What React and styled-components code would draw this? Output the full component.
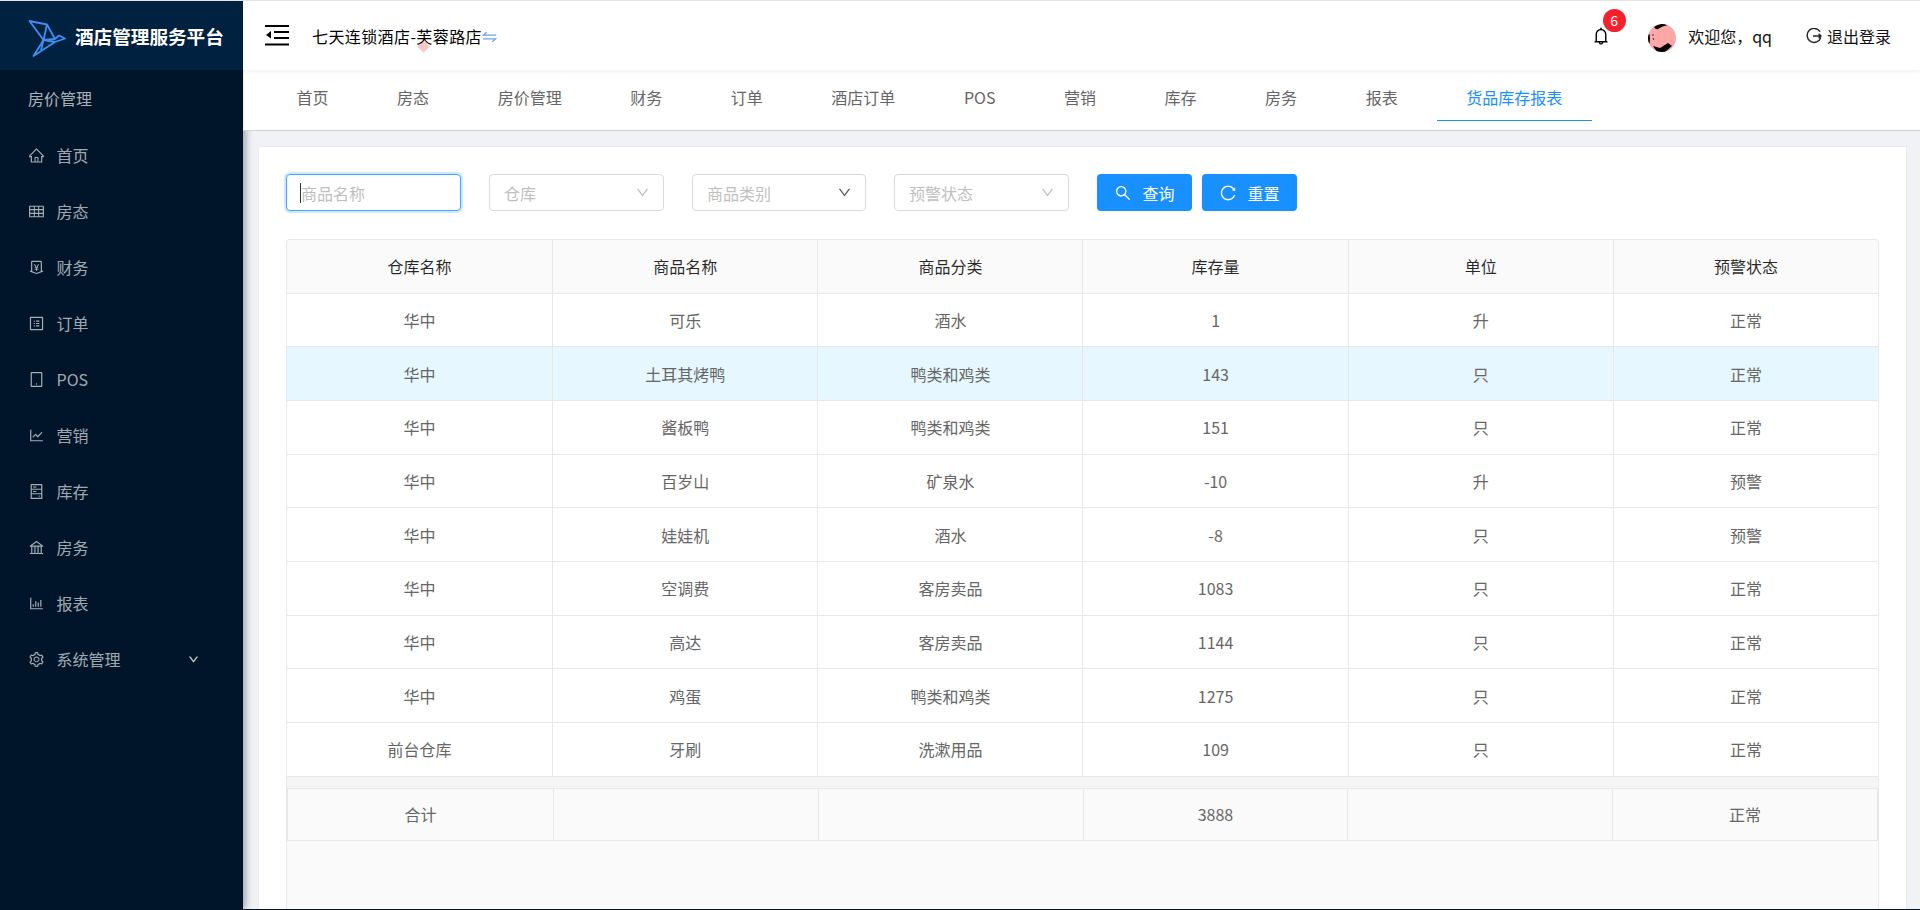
import React from 'react';
import styled, { createGlobalStyle } from 'styled-components';
import {
  AiOutlineHome,
  AiOutlineTable,
  AiOutlineMoneyCollect,
  AiOutlineProfile,
  AiOutlineTablet,
  AiOutlineLineChart,
  AiOutlineHdd,
  AiOutlineBank,
  AiOutlineBarChart,
  AiOutlineSetting,
  AiOutlineBell,
  AiOutlineSearch,
  AiOutlineReload,
  AiOutlineDown,
} from 'react-icons/ai';

const FONT = '"Noto Sans CJK SC", "Noto Sans", sans-serif';

const GlobalStyle = createGlobalStyle`
  html, body {
    margin: 0;
    padding: 0;
    height: 100%;
    overflow: hidden;
    font-family: ${FONT};
    font-size: 16px;
  }
  #root {
    height: 100%;
  }
  * {
    box-sizing: border-box;
  }
`;

const Page = styled.div`
  width: 1920px;
  height: 910px;
  display: flex;
  flex-direction: column;
  border-top: 1px solid #e4e4e4;
  border-bottom: 1px solid #001529;
  overflow: hidden;
`;

const Shell = styled.div`
  flex: 1;
  min-height: 0;
  display: flex;
`;

const Sidebar = styled.aside`
  width: 243px;
  flex-shrink: 0;
  background: #001529;
  box-shadow: 2px 0 8px rgba(0, 21, 41, 0.4);
  position: relative;
  z-index: 1;
`;

const Brand = styled.div`
  height: 69px;
  background: #002140;
  display: flex;
  align-items: center;
  padding-left: 27px;
  gap: 8px;

  & > svg {
    margin-top: 7px;
  }
`;

const BrandName = styled.span`
  color: #fff;
  font-size: 18.6px;
  font-weight: 700;
  white-space: nowrap;
`;

const SideTitle = styled.div`
  height: 57px;
  line-height: 56px;
  padding-left: 28px;
  color: rgba(255, 255, 255, 0.68);
`;

const SideList = styled.ul`
  list-style: none;
  margin: 0;
  padding: 0;
`;

const SideItem = styled.li`
  height: 56px;
  display: flex;
  align-items: center;
  padding: 0 44px 0 28px;
  color: rgba(255, 255, 255, 0.65);
  font-size: 16px;

  & > svg {
    font-size: 17px;
    flex-shrink: 0;
  }

  & > span {
    margin-left: 11.5px;
    flex: 1;
  }

  & > svg.chevron {
    font-size: 11px;
    stroke-width: 60;
  }
`;

const Main = styled.div`
  flex: 1;
  min-width: 0;
  display: flex;
  flex-direction: column;
  background: #f0f2f5;
`;

const TopBar = styled.header`
  height: 69px;
  background: #fff;
  display: flex;
  align-items: center;
  padding: 0 29px 0 22px;
  box-shadow: 0 1px 4px rgba(0, 21, 41, 0.08);
  position: relative;
  z-index: 3;
`;

const HotelName = styled.div`
  margin-left: 23px;
  color: #000;
  display: flex;
  align-items: center;
  letter-spacing: 0.4px;
  position: relative;
`;

const Diamond = styled.i`
  position: absolute;
  left: 107px;
  top: 18px;
  width: 9px;
  height: 9px;
  background: #f6c9c9;
  transform: rotate(45deg);
  z-index: -1;
`;

const TopRight = styled.div`
  margin-left: auto;
  display: flex;
  align-items: center;
  color: #111;

  & > svg {
    margin-top: 4px;
  }
`;

const BellWrap = styled.div`
  position: relative;
  display: flex;
  width: 20px;
  height: 20px;
  font-size: 20px;
  color: #000;
  margin-right: 37px;
  margin-top: 1px;
`;

const Badge = styled.span`
  position: absolute;
  left: 12px;
  top: -17px;
  width: 23px;
  height: 23px;
  border-radius: 50%;
  background: #f5222d;
  color: #fff;
  font-size: 14px;
  line-height: 23px;
  text-align: center;
`;

const Welcome = styled.span`
  margin-left: 12.5px;
  margin-right: 34px;
`;

const Logout = styled.span`
  display: flex;
  align-items: center;
  gap: 5px;
`;

const TabBar = styled.nav`
  height: 61px;
  flex-shrink: 0;
  background: #fff;
  display: flex;
  align-items: flex-start;
  gap: 9.55px;
  padding: 1px 0 0 23px;
  border-left: 1px solid #eaeaea;
  border-bottom: 1px solid #d0d0d0;
  position: relative;
  z-index: 2;
`;

const Tab = styled.div`
  height: 50px;
  line-height: 53px;
  padding: 0 29.5px;
  color: ${(p) => (p.$active ? '#1890ff' : '#666')};
  border-bottom: 1px solid ${(p) => (p.$active ? '#1890ff' : 'transparent')};
  white-space: nowrap;
`;

const Content = styled.main`
  flex: 1;
  min-height: 0;
  padding: 15px 13px 0 15px;
`;

const Card = styled.section`
  height: 100%;
  background: #fff;
  border: 1px solid #e9ebef;
  border-bottom: 0;
  border-radius: 2px 2px 0 0;
  padding: 27px 27px 0 27px;
  display: flex;
  flex-direction: column;
`;

const Filters = styled.div`
  display: flex;
  align-items: center;
  height: 37px;
  margin-bottom: 28px;
`;

const FieldBase = styled.div`
  position: relative;
  width: ${(p) => p.$w || 175}px;
  height: 37px;
  border: 1px solid #d9d9d9;
  border-radius: 4px;
  background: #fff;
  display: flex;
  align-items: center;
  margin-right: 28px;
  padding: 0 14px;
  color: #bfbfbf;
`;

const FocusField = styled(FieldBase)`
  border-color: #40a9ff;
  box-shadow: 0 0 0 2px rgba(24, 144, 255, 0.2);
`;

const NameInput = styled.input`
  width: 100%;
  border: 0;
  outline: 0;
  padding: 0;
  background: transparent;
  font: inherit;

  &::placeholder {
    color: #bfbfbf;
    opacity: 1;
  }
`;

const Caret = styled.i`
  position: absolute;
  left: 13px;
  top: 8px;
  width: 1px;
  height: 20px;
  background: #333;
`;

const Arrow = styled(AiOutlineDown)`
  margin-left: auto;
  font-size: 15px;
  color: ${(p) => (p.$dark ? '#555' : '#bfbfbf')};
  margin-right: -1px;
`;

const Button = styled.button`
  width: 95px;
  height: 37px;
  border: 0;
  border-radius: 4px;
  background: #1890ff;
  color: #fff;
  font: inherit;
  font-size: 16px;
  display: flex;
  align-items: center;
  justify-content: center;
  gap: 10px;
  margin-right: 10px;
  padding: 0;

  & > svg {
    font-size: 18px;
  }
`;

const TableBox = styled.div`
  flex: 1;
  min-height: 0;
  border: 1px solid #e8e8e8;
  border-bottom: 0;
  border-radius: 4px 4px 0 0;
  background: #fafafa;
  overflow: hidden;
`;

const Row = styled.div`
  display: grid;
  grid-template-columns: repeat(6, 1fr);
  height: 53.67px;
  background: ${(p) => (p.$selected ? '#e6f7ff' : p.$head ? '#fafafa' : '#fff')};
  border-bottom: 1px solid #e8e8e8;
  color: ${(p) => (p.$head ? 'rgba(0, 0, 0, 0.85)' : '#666')};
`;

const Cell = styled.div`
  display: flex;
  align-items: center;
  justify-content: center;
  border-left: 1px solid #e8e8e8;

  &:first-child {
    border-left: 0;
  }
`;

const Spacer = styled.div`
  height: 11px;
  background: #f5f5f5;
`;

const FootRow = styled(Row)`
  background: #fafafa;
  border-top: 1px solid #e8e8e8;
  border-left: 1px solid #e8e8e8;
  border-right: 1px solid #e8e8e8;
  color: #666;
`;

const Logo = () => (
  <svg width="40" height="40" viewBox="0 0 40 40" fill="none" stroke="#3f8ef2" strokeWidth="1.8" strokeLinejoin="round">
    <path d="M2.5 2 L20 5.5 L28 20 L32 16.5 L38 19.5 L28 23 L6.5 37 L16.5 21 Z" />
    <path d="M20 5.5 L16.5 21 L28 20 M28 23 L16.5 21 M14 31 L16.5 21" />
  </svg>
);

const CollapseIcon = () => (
  <svg width="24" height="21" viewBox="0 0 24 21" fill="#000">
    <rect x="0" y="0" width="24" height="2" />
    <rect x="9" y="6" width="15" height="2" />
    <rect x="9" y="12" width="15" height="2" />
    <rect x="0" y="18.5" width="24" height="2" />
    <path d="M6 6 L1 10 L6 13.5 Z" />
  </svg>
);

const SwitchIcon = () => (
  <svg width="15" height="12" viewBox="0 0 16 12" fill="none" stroke="#6f9ff0" strokeWidth="1.4" style={{ marginTop: 2 }}>
    <path d="M15 4 H1.5 L5 1" />
    <path d="M1 8 H14.5 L11 11" />
  </svg>
);

const LogoutIcon = () => (
  <svg width="16" height="16" viewBox="0 0 16 16" fill="none" stroke="#222" strokeWidth="1.4">
    <path d="M14 3.6 A7 7 0 1 0 14.8 9.5" />
    <path d="M7 8 H15 M12.6 5.8 L15 8 L12.6 10.2" />
  </svg>
);

const Avatar = () => (
  <svg width="28" height="28" viewBox="0 0 28 28">
    <defs>
      <clipPath id="avatarClip">
        <circle cx="14" cy="14" r="14" />
      </clipPath>
    </defs>
    <circle cx="14" cy="14" r="14" fill="#ffa6a6" />
    <g clipPath="url(#avatarClip)" fill="#000">
      <path d="M6 3 Q13 -2 20 1 Q14 2 10 5 Q8 6 6 3 Z" />
      <path d="M0 11 L1.5 10 L2 15 L1.5 20 L0 18 Z" />
      <path d="M5 22 L12 24 L20 19 L24 22 L17 28 L9 28 Z" />
      <circle cx="5" cy="11" r="0.7" />
      <circle cx="5.5" cy="15" r="0.7" />
    </g>
  </svg>
);

const menu = [
  [AiOutlineHome, '首页'],
  [AiOutlineTable, '房态'],
  [AiOutlineMoneyCollect, '财务'],
  [AiOutlineProfile, '订单'],
  [AiOutlineTablet, 'POS'],
  [AiOutlineLineChart, '营销'],
  [AiOutlineHdd, '库存'],
  [AiOutlineBank, '房务'],
  [AiOutlineBarChart, '报表'],
];

const tabs = ['首页', '房态', '房价管理', '财务', '订单', '酒店订单', 'POS', '营销', '库存', '房务', '报表', '货品库存报表'];

const columns = ['仓库名称', '商品名称', '商品分类', '库存量', '单位', '预警状态'];

const rows = [
  ['华中', '可乐', '酒水', '1', '升', '正常'],
  ['华中', '土耳其烤鸭', '鸭类和鸡类', '143', '只', '正常'],
  ['华中', '酱板鸭', '鸭类和鸡类', '151', '只', '正常'],
  ['华中', '百岁山', '矿泉水', '-10', '升', '预警'],
  ['华中', '娃娃机', '酒水', '-8', '只', '预警'],
  ['华中', '空调费', '客房卖品', '1083', '只', '正常'],
  ['华中', '高达', '客房卖品', '1144', '只', '正常'],
  ['华中', '鸡蛋', '鸭类和鸡类', '1275', '只', '正常'],
  ['前台仓库', '牙刷', '洗漱用品', '109', '只', '正常'],
];

const App = () => {
  return (
    <Page>
      <GlobalStyle />
      <Shell>
        <Sidebar>
          <Brand>
            <Logo />
            <BrandName>酒店管理服务平台</BrandName>
          </Brand>
          <SideTitle>房价管理</SideTitle>
          <SideList>
            {menu.map(([Icon, label]) => (
              <SideItem key={label}>
                <Icon />
                <span>{label}</span>
              </SideItem>
            ))}
            <SideItem>
              <AiOutlineSetting />
              <span>系统管理</span>
              <AiOutlineDown className="chevron" />
            </SideItem>
          </SideList>
        </Sidebar>
        <Main>
          <TopBar>
            <CollapseIcon />
            <HotelName>
              七天连锁酒店-芙蓉路店
              <SwitchIcon />
              <Diamond />
            </HotelName>
            <TopRight>
              <BellWrap>
                <AiOutlineBell />
                <Badge>6</Badge>
              </BellWrap>
              <Avatar />
              <Welcome>欢迎您，qq</Welcome>
              <Logout>
                <LogoutIcon />
                退出登录
              </Logout>
            </TopRight>
          </TopBar>
          <TabBar>
            {tabs.map((t, i) => (
              <Tab key={t + i} $active={i === tabs.length - 1}>
                {t}
              </Tab>
            ))}
          </TabBar>
          <Content>
            <Card>
              <Filters>
                <FocusField>
                  <NameInput placeholder="商品名称" readOnly />
                  <Caret />
                </FocusField>
                <FieldBase>
                  仓库
                  <Arrow />
                </FieldBase>
                <FieldBase $w={174}>
                  商品类别
                  <Arrow $dark />
                </FieldBase>
                <FieldBase>
                  预警状态
                  <Arrow />
                </FieldBase>
                <Button>
                  <AiOutlineSearch />
                  查询
                </Button>
                <Button>
                  <AiOutlineReload />
                  重置
                </Button>
              </Filters>
              <TableBox>
                <Row $head>
                  {columns.map((c) => (
                    <Cell key={c}>{c}</Cell>
                  ))}
                </Row>
                {rows.map((r, i) => (
                  <Row key={i} $selected={i === 1}>
                    {r.map((v, j) => (
                      <Cell key={j}>{v}</Cell>
                    ))}
                  </Row>
                ))}
                <Spacer />
                <FootRow>
                  <Cell>合计</Cell>
                  <Cell />
                  <Cell />
                  <Cell>3888</Cell>
                  <Cell />
                  <Cell>正常</Cell>
                </FootRow>
              </TableBox>
            </Card>
          </Content>
        </Main>
      </Shell>
    </Page>
  );
};

export default App;
